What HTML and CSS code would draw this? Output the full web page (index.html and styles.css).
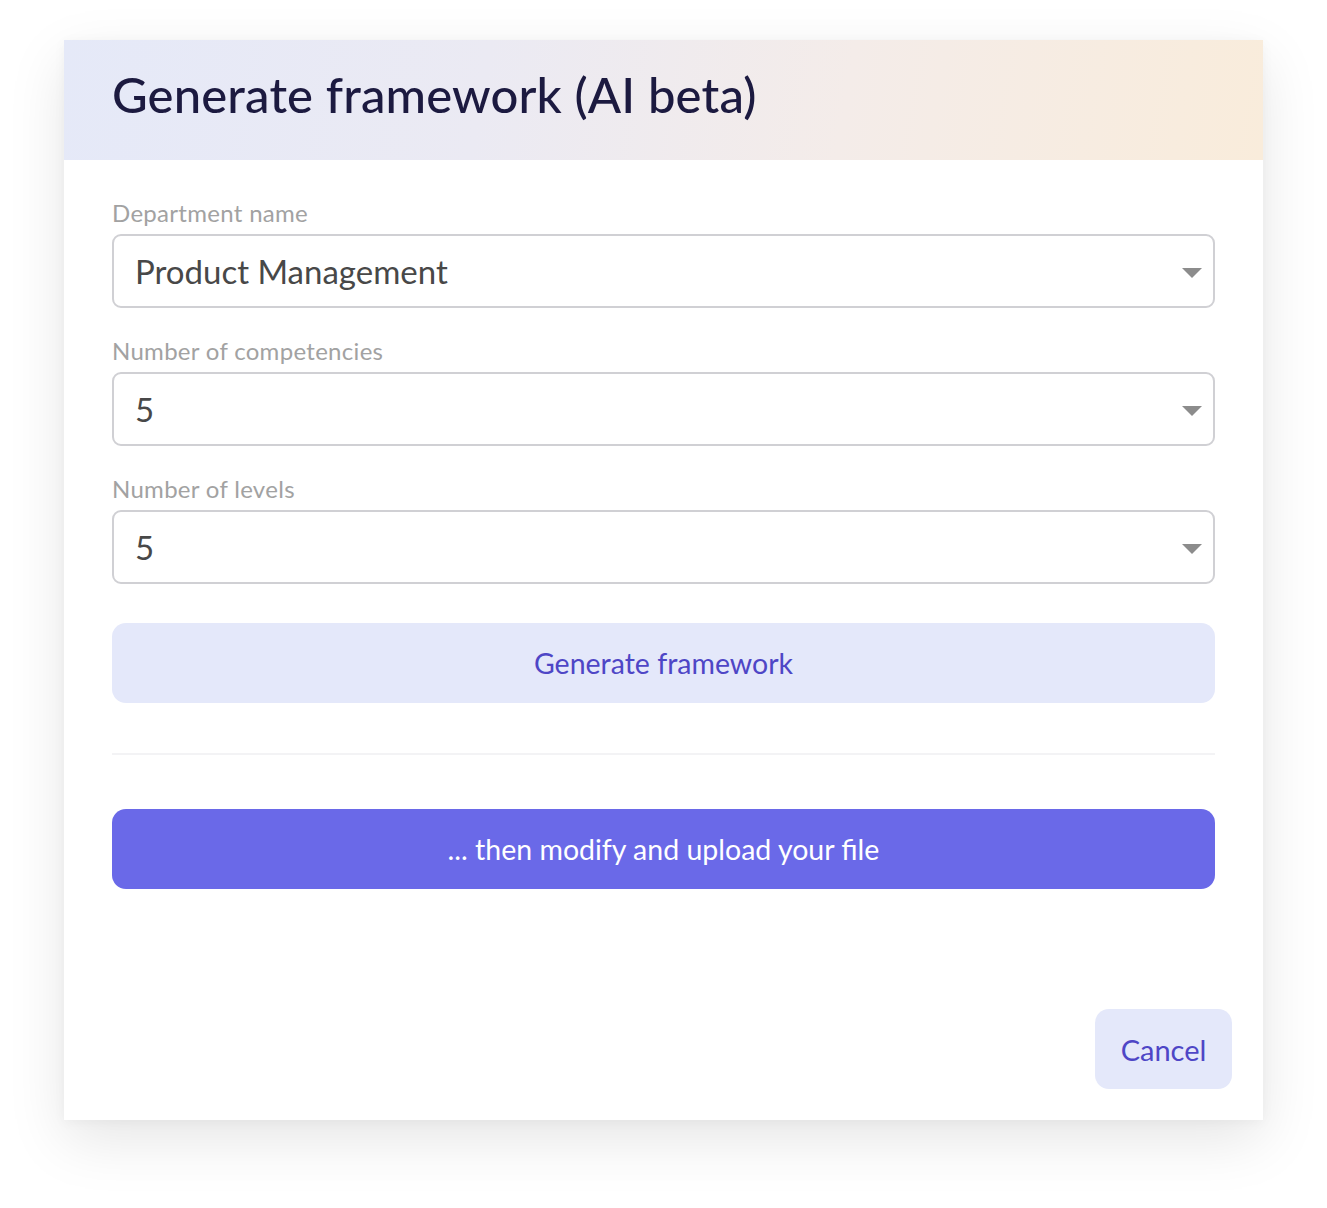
FILE: index.html
```html
<!DOCTYPE html>
<html lang="en">
<head>
<meta charset="utf-8">
<title>Generate framework (AI beta)</title>
<link rel="stylesheet" href="styles.css">
</head>
<body>
<div class="stage">
  <div class="modal">
    <div class="modal-header">
      <h1 class="modal-title">Generate framework (AI beta)</h1>
    </div>
    <div class="modal-body">
      <div class="field">
        <label class="field-label">Department name</label>
        <div class="select">
          <span class="select-value">Product Management</span>
          <span class="caret"></span>
        </div>
      </div>
      <div class="field">
        <label class="field-label">Number of competencies</label>
        <div class="select">
          <span class="select-value">5</span>
          <span class="caret"></span>
        </div>
      </div>
      <div class="field">
        <label class="field-label">Number of levels</label>
        <div class="select">
          <span class="select-value">5</span>
          <span class="caret"></span>
        </div>
      </div>
      <button class="btn btn-soft btn-block">Generate framework</button>
      <hr class="divider">
      <button class="btn btn-primary btn-block">... then modify and upload your file</button>
    </div>
    <div class="modal-footer">
      <button class="btn btn-soft btn-cancel">Cancel</button>
    </div>
  </div>
</div>
</body>
</html>
```

FILE: styles.css
```css
* { box-sizing: border-box; }

html, body {
  margin: 0;
  padding: 0;
  background: #ffffff;
  font-family: "Lato", "Noto Sans", "Liberation Sans", sans-serif;
}

.stage {
  padding: 40px 64px 88px 64px;
}

.modal {
  width: 1199px;
  height: 1080px;
  background: #ffffff;
  display: flex;
  flex-direction: column;
  box-shadow: 0 20px 55px rgba(0, 0, 0, 0.10), 0 2px 12px rgba(0, 0, 0, 0.04);
}

.modal-header {
  height: 120px;
  display: flex;
  align-items: center;
  padding: 0 48px 12px 48px;
  background: linear-gradient(100deg, #e5e9f8 0%, #ebeaf3 35%, #f4ece9 65%, #f9ecdb 100%);
}

.modal-title {
  margin: 0;
  font-size: 49px;
  font-weight: 500;
  color: #1c1a40;
  letter-spacing: 0.15px;
}

.modal-body {
  padding: 40px 48px 0 48px;
  display: flex;
  flex-direction: column;
}

.field {
  display: flex;
  flex-direction: column;
  margin-bottom: 30px;
}

.field:last-of-type {
  margin-bottom: 39px;
}

.field-label {
  font-size: 24px;
  line-height: 26px;
  letter-spacing: 0.3px;
  color: #a2a2a2;
  margin-bottom: 8px;
}

.select {
  height: 74px;
  border: 2px solid #d0d0d4;
  border-radius: 9px;
  display: flex;
  align-items: center;
  justify-content: space-between;
  padding: 0 11px 0 21px;
}

.select-value {
  font-size: 33px;
  color: #484848;
}

.caret {
  width: 0;
  height: 0;
  margin-top: 4px;
  border-left: 10px solid transparent;
  border-right: 10px solid transparent;
  border-top: 10px solid #8c8c8c;
}

.btn {
  border: none;
  font-family: inherit;
  cursor: pointer;
}

.btn-block {
  width: 100%;
  height: 80px;
  border-radius: 14px;
  font-size: 28.5px;
}

.btn-soft {
  background: #e4e8fa;
  color: #4e46c6;
}

.btn-primary {
  background: #6a69e8;
  color: #ffffff;
}

.divider {
  border: none;
  border-top: 2px solid #f3f3f5;
  margin: 50px 0 54px 0;
}

.modal-footer {
  margin-top: auto;
  display: flex;
  justify-content: flex-end;
  padding: 0 31px 31px 31px;
}

.btn-cancel {
  width: 137px;
  height: 80px;
  border-radius: 14px;
  font-size: 29px;
}
```
